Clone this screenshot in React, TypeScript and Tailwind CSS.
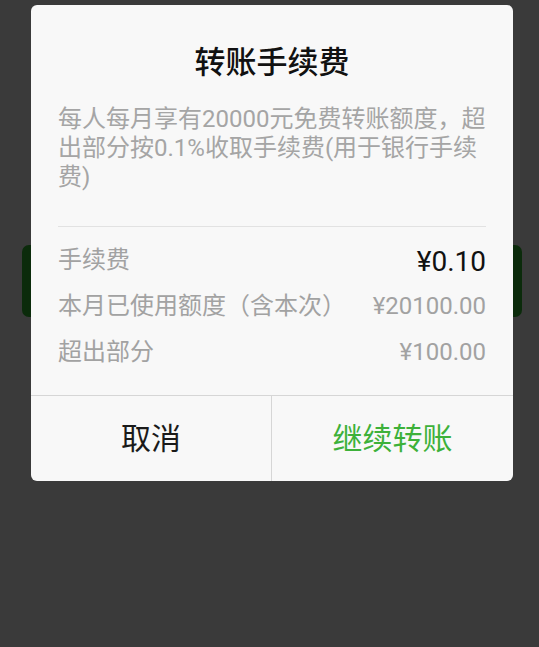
import React from 'react'

const font = { fontFamily: 'Roboto, "Noto Sans CJK SC", sans-serif' }

function FeeRow({ label, value, strong }: { label: string; value: string; strong?: boolean }) {
  return (
    <div className="flex h-[46px] items-center justify-between">
      <span className="text-[24px] leading-none text-[#a2a2a2]">{label}</span>
      <span
        className={
          strong
            ? 'text-[28px] leading-none text-[#111111] mt-[4px]'
            : 'text-[24px] leading-none text-[#a2a2a2]'
        }
      >
        {value}
      </span>
    </div>
  )
}

export default function App() {
  return (
    <div className="relative h-[647px] w-[539px] overflow-hidden bg-[#3a3a3a]" style={font}>
      {/* page behind the dimmed overlay */}
      <div className="pl-[22px] pr-[17px] pt-[245px]">
        <div className="h-[72px] w-full rounded-[7px] bg-[#0b2b0b]"></div>
      </div>

      {/* dialog */}
      <div className="absolute left-[31px] top-[5px] w-[482px] overflow-hidden rounded-[6px] bg-[#f8f8f8]">
        <h2 className="pt-[38px] text-center text-[31px] leading-[40px] font-medium text-[#111111]">
          转账手续费
        </h2>

        <div className="px-[27px]">
          <p className="mt-[22px] whitespace-nowrap text-[24px] leading-[29px] text-[#a5a5a5]">
            每人每月享有20000元免费转账额度，超
            <br />
            出部分按0.1%收取手续费(用于银行手续
            <br />
            费)
          </p>

          <div className="mt-[34px] h-px bg-[#e2e2e2]"></div>

          <div className="pt-[10px] pb-[20px]">
            <FeeRow label="手续费" value="¥0.10" strong />
            <FeeRow label="本月已使用额度（含本次）" value="¥20100.00" />
            <FeeRow label="超出部分" value="¥100.00" />
          </div>
        </div>

        <div className="grid h-[86px] grid-cols-2 border-t border-[#d6d6d6]">
          <button className="flex items-center justify-center border-r border-[#d6d6d6] text-[30px] text-[#1a1a1a]">
            取消
          </button>
          <button className="flex items-center justify-center text-[30px] text-[#3db13a]">
            继续转账
          </button>
        </div>
      </div>
    </div>
  )
}
